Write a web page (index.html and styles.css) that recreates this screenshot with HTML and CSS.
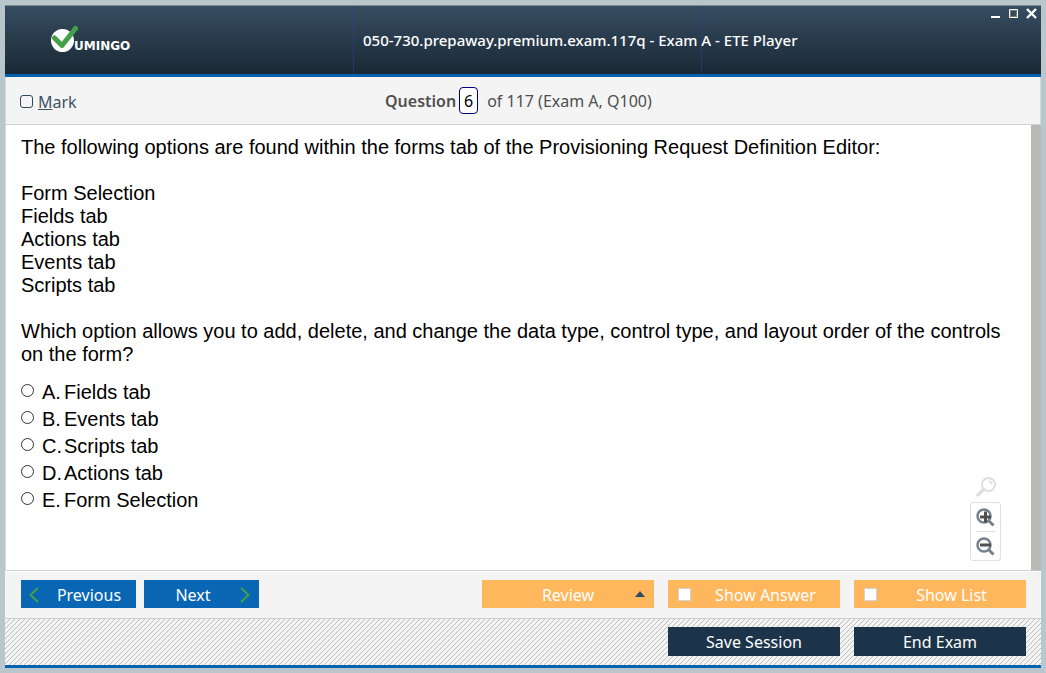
FILE: index.html
```html
<!DOCTYPE html>
<html lang="en">
<head>
<meta charset="utf-8">
<title>050-730.prepaway.premium.exam.117q - Exam A - ETE Player</title>
<link rel="stylesheet" href="styles.css">
</head>
<body>
<div class="window">
  <header class="titlebar">
    <div class="brand">
      <svg class="brand-mark" viewBox="0 0 28 28" aria-hidden="true">
        <circle cx="12.500" cy="15.500" r="11.500" fill="#fff"/>
        <path d="M4.500 13 L12 20.500 L25.500 3.500" fill="none" stroke="#43a047" stroke-width="5" stroke-linecap="round" stroke-linejoin="round"/>
      </svg>
      <span class="brand-name">UMINGO</span>
    </div>
    <h1 class="title">050-730.prepaway.premium.exam.117q - Exam A - ETE Player</h1>
    <div class="window-controls">
      <button type="button" class="window-button" aria-label="Minimize"><svg viewBox="0 0 11 11"><path d="M1 9H10" stroke="#fff" stroke-width="2"/></svg></button>
      <button type="button" class="window-button" aria-label="Maximize"><svg viewBox="0 0 11 11"><path d="M1.500 1.500H9.500V9.500H1.500Z" fill="none" stroke="#fff"/><path d="M2.500 2.500H8.500V8.500H2.500Z" fill="none" stroke="#7b7b72"/></svg></button>
      <button type="button" class="window-button" aria-label="Close"><svg viewBox="0 0 11 11"><path d="M1 1L10 10M10 1L1 10" stroke="#fff" stroke-width="2.400"/></svg></button>
    </div>
  </header>

  <div class="question-bar">
    <label class="mark"><input type="checkbox" class="mark-box"><span><u>M</u>ark</span></label>
    <div class="position">
      <label for="question-number" class="position-label">Question</label>
      <input id="question-number" class="position-input" type="text" value="6">
      <span>of 117 (Exam A, Q100)</span>
    </div>
  </div>

  <main class="content">
    <div class="question">
      <p>The following options are found within the forms tab of the Provisioning Request Definition Editor:</p>
      <p>Form Selection<br>Fields tab<br>Actions tab<br>Events tab<br>Scripts tab</p>
      <p>Which option allows you to add, delete, and change the data type, control type, and layout order of the controls on the form?</p>
      <div class="answers" role="radiogroup" aria-label="Answers">
        <label class="answer"><input type="radio" name="answer"><span class="letter">A.</span><span>Fields tab</span></label>
        <label class="answer"><input type="radio" name="answer"><span class="letter">B.</span><span>Events tab</span></label>
        <label class="answer"><input type="radio" name="answer"><span class="letter">C.</span><span>Scripts tab</span></label>
        <label class="answer"><input type="radio" name="answer"><span class="letter">D.</span><span>Actions tab</span></label>
        <label class="answer"><input type="radio" name="answer"><span class="letter">E.</span><span>Form Selection</span></label>
      </div>
    </div>
    <div class="zoom">
      <svg class="zoom-reset" viewBox="0 0 20 20" aria-hidden="true">
        <circle cx="12.500" cy="7.500" r="6.500" fill="none" stroke="#dedede" stroke-width="2"/>
        <path d="M7.500 12.500L2 18" stroke="#dedede" stroke-width="3.500" stroke-linecap="round"/>
        <path d="M12.500 4Q15.500 4.500 16 7.500" fill="none" stroke="#dedede" stroke-width="1.500"/>
      </svg>
      <div class="zoom-panel">
        <button type="button" class="zoom-button" aria-label="Zoom in"><svg viewBox="0 0 19 19"><circle cx="8" cy="8" r="6.500" fill="none" stroke="#75828d" stroke-width="2.500"/><path d="M13 13L17.500 17.500" stroke="#75828d" stroke-width="3"/><path d="M4 9H15M9.500 3.500V14.500" stroke="#505050" stroke-width="3"/></svg></button>
        <button type="button" class="zoom-button" aria-label="Zoom out"><svg viewBox="0 0 19 19"><circle cx="8" cy="8" r="6.500" fill="none" stroke="#75828d" stroke-width="2.500"/><path d="M13 13L17.500 17.500" stroke="#75828d" stroke-width="3"/><path d="M4 8H15" stroke="#505050" stroke-width="3"/></svg></button>
      </div>
    </div>
  </main>

  <nav class="nav-bar">
    <button type="button" class="button step"><svg class="chevron" viewBox="0 0 10 16" aria-hidden="true"><path d="M9 1L1.500 8L9 15" fill="none" stroke="#43a047" stroke-width="2"/></svg><span class="caption">Previous</span></button>
    <button type="button" class="button step step-next"><span class="caption">Next</span><svg class="chevron" viewBox="0 0 10 16" aria-hidden="true"><path d="M1 1L8.500 8L1 15" fill="none" stroke="#43a047" stroke-width="2"/></svg></button>
    <div class="tools">
      <button type="button" class="button tool">Review<svg class="arrow" viewBox="0 0 10 6" aria-hidden="true"><path d="M0 6L5 0L10 6Z" fill="#2f4a60"/></svg></button>
      <label class="button tool tool-check"><input type="checkbox"><span class="caption">Show Answer</span></label>
      <label class="button tool tool-check"><input type="checkbox"><span class="caption">Show List</span></label>
    </div>
  </nav>

  <footer class="session-bar">
    <button type="button" class="button session">Save Session</button>
    <button type="button" class="button session">End Exam</button>
  </footer>
</div>
</body>
</html>
```

FILE: styles.css
```css
* { box-sizing: border-box; }

body {
  margin: 0;
  padding: 5px;
  min-height: 100vh;
  display: flex;
  background: #b9c6cc;
  font-family: "Noto Sans", "Open Sans", sans-serif;
  font-size: 16px;
}

button, input { font: inherit; margin: 0; }
button { border: 0; padding: 0; background: none; }
svg { display: block; }

.window {
  flex: 1;
  min-width: 0;
  display: flex;
  flex-direction: column;
  background: #f4f4f4;
  border-bottom: 3px solid #0462b0;
}

/* Title bar */
.titlebar {
  display: grid;
  grid-template-columns: 349px 348px minmax(0, 1fr);
  height: 72px;
  border-top: 1px solid #7c8a90;
  border-bottom: 3px solid #0462b0;
  background: linear-gradient(#364d61, #1a2835);
  color: #fff;
}
.brand { display: flex; padding: 19px 0 0 45px; border-right: 1px dotted #2f3f98; }
.brand-mark { width: 28px; height: 28px; }
.brand-name {
  margin-left: -4px;
  padding-top: 13px;
  font: bold 12px/16px "DejaVu Sans", sans-serif;
}
.title {
  min-width: 0;
  margin: 0;
  padding: 23px 0 0 9px;
  font-size: 15px;
  line-height: 22px;
  font-weight: 500;
  white-space: nowrap;
  border-right: 1px dotted #2f3f98;
}
.window-controls { display: flex; justify-content: flex-end; gap: 7px; padding: 2px 4px 0 0; }
.window-button { width: 11px; height: 11px; }
.window-button svg { width: 11px; height: 11px; }

/* Question bar */
.question-bar {
  display: grid;
  grid-template-columns: 365px 1fr;
  align-items: center;
  height: 48px;
  padding-left: 14px;
  border-bottom: 1px solid #d0d0d0;
  border-left: 1px solid #d8d8d8;
  border-right: 1px solid #d8d8d8;
  color: #4f4f4f;
}
.mark { display: flex; align-items: center; gap: 5px; color: #3d5264; padding-top: 2px; }
.mark-box {
  appearance: none;
  width: 13px;
  height: 13px;
  border: 1px solid #2f485c;
  border-radius: 3px;
}
.position { display: flex; align-items: center; }
.position-label { font-weight: 600; }
.position-input {
  width: 19px;
  height: 27px;
  margin: 0 9px 0 3px;
  padding: 0;
  border: 1px solid #000080;
  border-radius: 4px;
  background: #fff;
  color: #000;
  text-align: center;
}

/* Question and answers */
.content {
  position: relative;
  flex: 1;
  border-left: 1px solid #d8d8d8;
  border-right: 10px solid #bab9b5;
  border-bottom: 1px solid #d0d0d0;
  background: #fff;
  color: #000;
  font: 20px/23px "Liberation Sans", Arial, sans-serif;
}
.question { padding: 11px 8px 0 15px; }
.question p { margin: 0 0 23px; }
.answers { margin-top: -10px; }
.answer { display: flex; align-items: center; height: 27px; }
.answer input {
  appearance: none;
  width: 13px;
  height: 13px;
  margin: 0 8px 4px 0;
  border: 1px solid #333;
  border-radius: 50%;
}
.letter { width: 22px; }

/* Zoom controls float over the question text */
.zoom {
  position: absolute;
  right: 30px;
  bottom: 9px;
  display: flex;
  flex-direction: column;
  align-items: center;
  gap: 5px;
}
.zoom-reset { width: 20px; height: 20px; }
.zoom-panel {
  width: 31px;
  padding: 0 5px;
  border: 1px solid #e0e0e0;
  border-radius: 3px;
}
.zoom-button { display: flex; align-items: center; width: 19px; height: 28px; }
.zoom-button svg { width: 19px; height: 19px; }
.zoom-button + .zoom-button { height: 29px; border-top: 1px solid #dedede; }

/* Bottom bars */
.nav-bar {
  display: flex;
  gap: 8px;
  height: 48px;
  padding: 8px 15px 0 16px;
  border-top: 1px solid #fff;
  border-bottom: 1px solid #cfcfcf;
}
.button {
  display: flex;
  align-items: center;
  justify-content: center;
  height: 28px;
  color: #fff;
}
.nav-bar .button { padding-top: 1px; }
.caption { flex: 1; text-align: center; }
.step { width: 115px; padding: 0 9px 0 8px; background: #0866b5; }
.step .caption { padding-left: 12px; }
.step-next .caption { padding: 0 6px 0 0; }
.chevron { width: 10px; height: 16px; }
.tools { display: flex; gap: 14px; margin-left: auto; }
.tool { position: relative; width: 172px; background: #ffb75d; }
.arrow { position: absolute; right: 9px; top: 11px; width: 10px; height: 6px; }
.tool-check { padding-left: 10px; }
.tool-check input {
  appearance: none;
  width: 13px;
  height: 13px;
  border: 1px solid #d4d4d4;
  background: #fff;
}
.session-bar {
  display: flex;
  justify-content: flex-end;
  gap: 14px;
  height: 46px;
  padding: 8px 15px 0 0;
  background: linear-gradient(135deg, #f4f4f4 42%, #bcbcbc 42% 58%, #f4f4f4 58%) 0 0 / 5px 5px;
}
.session { width: 172px; height: 29px; background: #1b344a; }
```
